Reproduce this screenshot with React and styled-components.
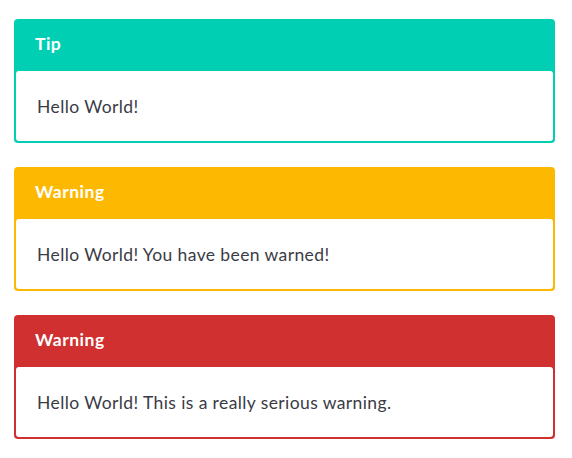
import React from 'react'
import styled, { createGlobalStyle } from 'styled-components'

const GlobalStyle = createGlobalStyle`
  body {
    margin: 0;
    background: #fff;
    font-family: Lato, "Open Sans", sans-serif;
  }
`

const Page = styled.div`
  display: flex;
  flex-direction: column;
  gap: 24px;
  padding: 19px 0 0 14px;
  width: 541px;
`

const Card = styled.div`
  display: flex;
  flex-direction: column;
  background: ${p => p.color};
  border-radius: 4px;
  padding: 0 2px 2px;
`

const Header = styled.div`
  height: 52px;
  box-sizing: border-box;
  display: flex;
  align-items: center;
  padding: 0 19px 4px;
  color: #fff;
  font-size: 17.5px;
  font-weight: 700;
  letter-spacing: 0.5px;
`

const Body = styled.div`
  height: 70px;
  display: flex;
  align-items: center;
  padding: 0 21px;
  background: #fff;
  border-radius: 3px;
  color: #3a3b45;
  font-size: 17.5px;
  letter-spacing: 0.4px;
`

const notes = [
  { title: 'Tip', text: 'Hello World!', color: '#00cfb4' },
  { title: 'Warning', text: 'Hello World! You have been warned!', color: '#fdb801' },
  { title: 'Warning', text: 'Hello World! This is a really serious warning.', color: '#d03030' },
]

export default function App() {
  return (
    <>
      <GlobalStyle />
      <Page>
        {notes.map((n, i) => (
          <Card key={i} color={n.color}>
            <Header>{n.title}</Header>
            <Body>{n.text}</Body>
          </Card>
        ))}
      </Page>
    </>
  )
}
